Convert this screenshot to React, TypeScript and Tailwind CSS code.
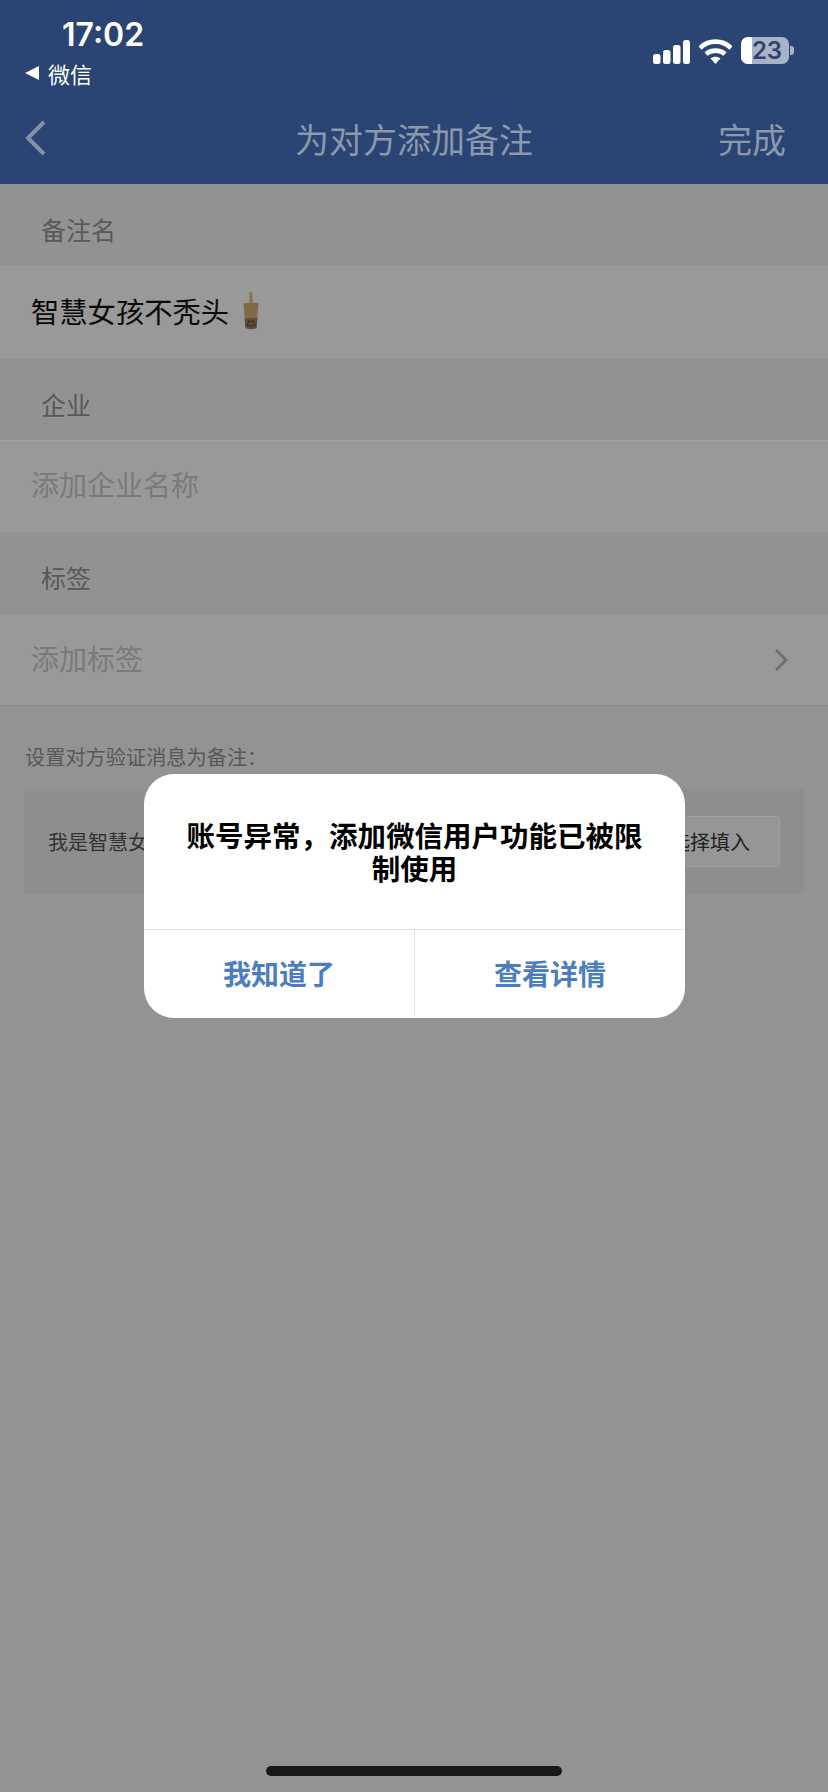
const cjk = "font-['Noto_Sans_CJK_SC',sans-serif]";

function SignalIcon() {
  return (
    <svg width="37" height="24" viewBox="0 0 37 24" fill="#fff">
      <rect x="0" y="14" width="7.5" height="10" rx="2.5" />
      <rect x="10" y="10" width="7.5" height="14" rx="2.5" />
      <rect x="20" y="5" width="7.5" height="19" rx="2.5" />
      <rect x="30" y="0" width="7" height="24" rx="2.5" />
    </svg>
  );
}

function WifiIcon() {
  return (
    <svg width="33" height="25" viewBox="0 0 33 25" fill="none" stroke="#fff" strokeWidth="4.6">
      <path d="M1 9C9.5 0.5 23.5 0.5 32 9" />
      <path d="M7 15C12 10.5 21 10.5 26 15" />
      <path d="M11.5 19.5L16.5 25L21.5 19.5C18.5 17 14.5 17 11.5 19.5Z" fill="#fff" stroke="none" />
    </svg>
  );
}

function Battery() {
  return (
    <div className="flex items-center gap-[1px]">
      <div className="relative flex h-[27px] w-[48px] overflow-hidden rounded-[7px] bg-[#a9b3c8]">
        <div className="h-full w-[11px] bg-white" />
        <span className="absolute inset-0 flex items-center justify-center pl-[4px] font-['Inter',sans-serif] text-[24px] font-semibold text-[#2f4270]">
          23
        </span>
      </div>
      <div className="h-[9px] w-[4px] rounded-r-[3px] bg-[#a9b3c8]" />
    </div>
  );
}

function BobaCup() {
  return (
    <svg width="20" height="38" viewBox="0 0 20 38" className="shrink-0">
      <path d="M8.5 0L11 0L12 12L8 12Z" fill="#85755a" />
      <path d="M2.5 11L17.5 11L15.5 36C12 37.5 8 37.5 4.5 36Z" fill="#7f6a45" />
      <path d="M3.5 26L16.5 26L15.5 36C12 37.5 8 37.5 4.5 36Z" fill="#5f4e3a" />
      <circle cx="6.5" cy="33" r="1.3" fill="#3f3027" />
      <circle cx="10" cy="34" r="1.3" fill="#3f3027" />
      <circle cx="13.5" cy="33" r="1.3" fill="#3f3027" />
      <circle cx="8" cy="29.5" r="1.3" fill="#3f3027" />
      <circle cx="12" cy="29.5" r="1.3" fill="#3f3027" />
    </svg>
  );
}

function SectionLabel({ text }: { text: string }) {
  return (
    <div className="flex h-[81px] items-center bg-[#929292] pl-[41px] pt-[10px] text-[25px] text-[#595959]">
      {text}
    </div>
  );
}

export default function App() {
  return (
    <div className={`relative flex h-[1792px] w-[828px] flex-col overflow-hidden bg-[#939393] ${cjk}`}>
      {/* Header */}
      <header className="flex h-[184px] flex-col bg-[#2a4474]">
        <div className="flex h-[92px] items-start justify-between">
          <div className="pl-[25px] pt-[16px]">
            <div className="pl-[37px] font-['Inter',sans-serif] text-[32px] font-semibold leading-[38px] text-white">
              17:02
            </div>
            <div className="mt-[4px] flex items-center gap-[9px] text-[22px] leading-[30px] text-white">
              <span className="h-0 w-0 border-y-[7px] border-r-[14px] border-y-transparent border-r-white" />
              微信
            </div>
          </div>
          <div className="flex items-end gap-[9px] pr-[34px] pt-[37px]">
            <SignalIcon />
            <WifiIcon />
            <Battery />
          </div>
        </div>
        <div className="grid flex-1 grid-cols-[1fr_auto_1fr] items-center px-[42px]">
          <svg width="28" height="38" viewBox="0 0 28 38" fill="none" stroke="#8492a8" strokeWidth="4" className="-ml-[20px]">
            <path d="M22 3L6 19L22 35" />
          </svg>
          <div className="text-[34px] text-[#8c98ac]">为对方添加备注</div>
          <div className="justify-self-end text-[34px] text-[#8c98ac]">完成</div>
        </div>
      </header>

      {/* Form */}
      <SectionLabel text="备注名" />
      <div className="flex h-[94px] items-center gap-[12px] bg-[#999999] pb-[2px] pl-[31px] text-[28.3px] text-[#0a0a0a]">
        智慧女孩不秃头
        <BobaCup />
      </div>
      <SectionLabel text="企业" />
      <div className="flex h-[92px] items-center border-t border-[#a0a0a0] bg-[#999999] pb-[6px] pl-[31px] text-[28px] text-[#7a7a7a]">
        添加企业名称
      </div>
      <SectionLabel text="标签" />
      <div className="flex h-[93px] items-center justify-between border-y border-[#8a8a8a] bg-[#999999] pl-[31px] pr-[40px] text-[28px] text-[#7a7a7a]">
        <span className="pb-[4px]">添加标签</span>
        <svg width="14" height="24" viewBox="0 0 14 24" fill="none" stroke="#6f6f6f" strokeWidth="2.8">
          <path d="M2 2L12 12L2 22" />
        </svg>
      </div>

      <div className="pl-[25px] pt-[36px] text-[20.2px] leading-[30px] text-[#585858]">设置对方验证消息为备注：</div>
      <div className="mx-[24px] mt-[17px] flex h-[105px] items-center justify-between bg-[#8e8e8e] pl-[24px] pr-[24px]">
        <span className="text-[20px] text-[#333333]">我是智慧女孩不秃头</span>
        <div className="flex h-[51px] w-[140px] items-center justify-center rounded-[3px] border border-[#9f9f9f] bg-[#969696] text-[20px] text-[#222222]">
          选择填入
        </div>
      </div>

      {/* Dialog */}
      <div className="absolute left-[144px] top-[774px] w-[541px] overflow-hidden rounded-[30px] bg-white">
        <div className="flex h-[155px] items-start justify-center px-[40px] pt-[44px] text-center text-[28.5px] font-bold leading-[33px] text-black">
          账号异常，添加微信用户功能已被限制使用
        </div>
        <div className="flex h-[89px] border-t border-[#e3e3e3] pb-[2px] text-[28px] font-bold text-[#4a7ebf]">
          <div className="flex w-[271px] items-center justify-center border-r border-[#e3e3e3]">我知道了</div>
          <div className="flex flex-1 items-center justify-center">查看详情</div>
        </div>
      </div>

      {/* Home indicator */}
      <div className="mt-auto flex justify-center pb-[16px]">
        <div className="h-[10px] w-[296px] rounded-full bg-[#191919]" />
      </div>
    </div>
  );
}
